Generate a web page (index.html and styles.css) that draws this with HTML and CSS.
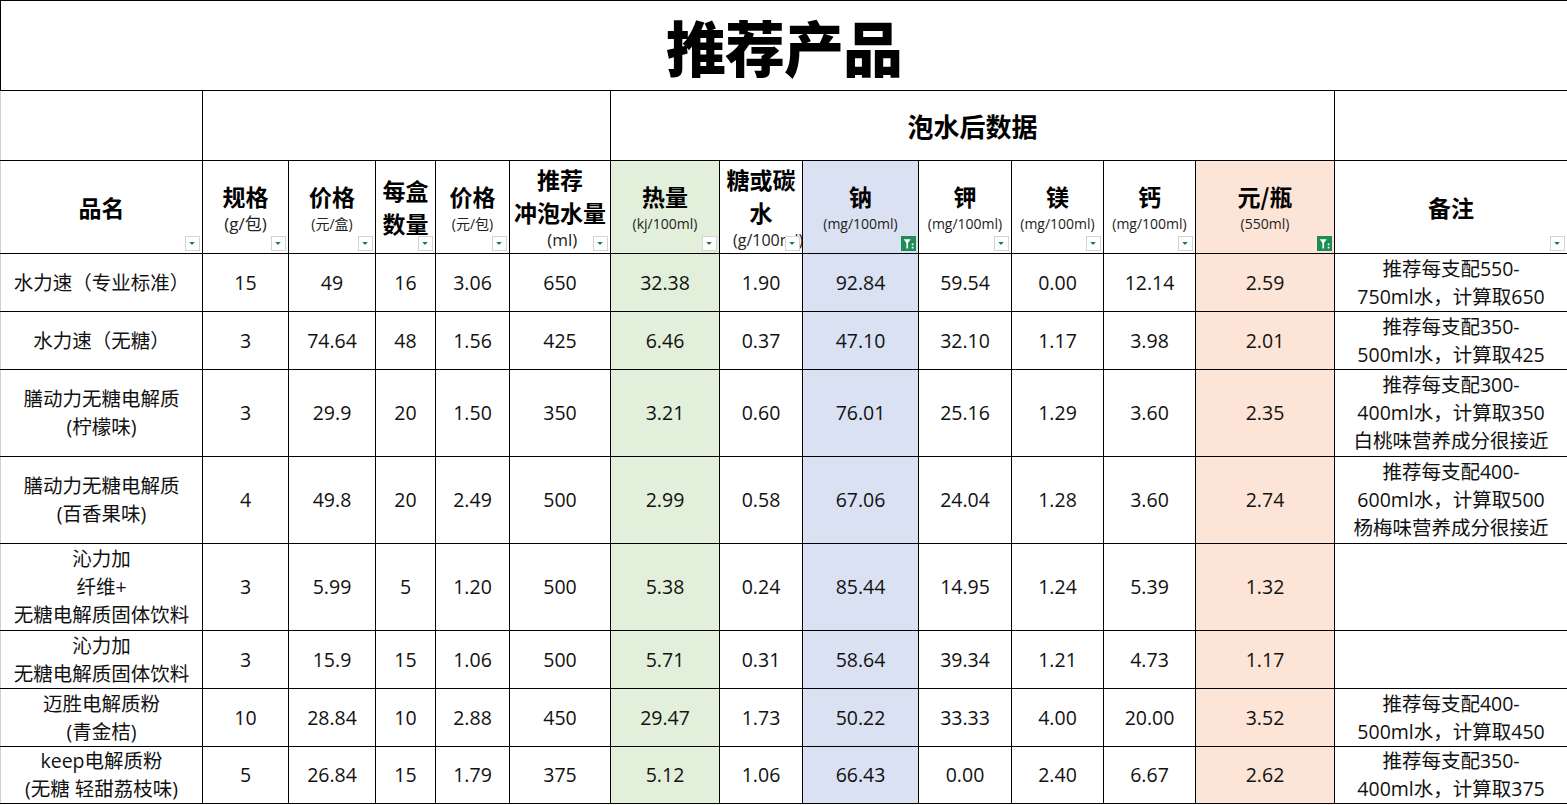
FILE: index.html
```html
<!DOCTYPE html>
<html lang="zh-CN">
<head>
<meta charset="utf-8">
<title>推荐产品</title>
<link rel="stylesheet" href="styles.css">
</head>
<body>
<table class="sheet">
  <colgroup>
    <col style="width:202px"><col style="width:86px"><col style="width:87px"><col style="width:60px"><col style="width:74px"><col style="width:101px"><col style="width:109px"><col style="width:83px"><col style="width:116px"><col style="width:93px"><col style="width:92px"><col style="width:92px"><col style="width:139px"><col style="width:233px">
  </colgroup>
  <tr class="r-title"><td colspan="14" class="title">推荐产品</td></tr>
  <tr class="r-group">
    <td class="c0"></td>
    <td colspan="5"></td>
    <td colspan="7" class="group">泡水后数据</td>
    <td></td>
  </tr>
  <tr class="r-head">
    <td class="hd c0"><div class="h">品名</div><span class="flt"><svg viewBox="0 0 14 14"><path d="M3.5 5.5h6l-3 3.2z"/></svg></span></td>
    <td class="hd"><div class="h">规格</div><div class="s s17">(g/包)</div><span class="flt"><svg viewBox="0 0 14 14"><path d="M3.5 5.5h6l-3 3.2z"/></svg></span></td>
    <td class="hd"><div class="h">价格</div><div class="s">(元/盒)</div><span class="flt"><svg viewBox="0 0 14 14"><path d="M3.5 5.5h6l-3 3.2z"/></svg></span></td>
    <td class="hd"><div class="h">每盒<br>数量</div><span class="flt"><svg viewBox="0 0 14 14"><path d="M3.5 5.5h6l-3 3.2z"/></svg></span></td>
    <td class="hd"><div class="h">价格</div><div class="s">(元/包)</div><span class="flt"><svg viewBox="0 0 14 14"><path d="M3.5 5.5h6l-3 3.2z"/></svg></span></td>
    <td class="hd"><div class="h">推荐<br>冲泡水量</div><div class="s s17">&nbsp;(ml)</div><span class="flt"><svg viewBox="0 0 14 14"><path d="M3.5 5.5h6l-3 3.2z"/></svg></span></td>
    <td class="hd green"><div class="h">热量</div><div class="s">(kj/100ml)</div><span class="flt"><svg viewBox="0 0 14 14"><path d="M3.5 5.5h6l-3 3.2z"/></svg></span></td>
    <td class="hd"><div class="h">糖或碳<br>水</div><div class="s s16 clip">(g/100ml)</div><span class="flt"><svg viewBox="0 0 14 14"><path d="M3.5 5.5h6l-3 3.2z"/></svg></span></td>
    <td class="hd blue"><div class="h">钠</div><div class="s">(mg/100ml)</div><span class="flt on"><svg viewBox="0 0 14 14"><path d="M2.5 3h6.6l-2.5 3.3v5.4h-1.6v-5.4z"/><rect x="10" y="7" width="1.6" height="1.6"/><rect x="10" y="10" width="1.6" height="1.6"/></svg></span></td>
    <td class="hd"><div class="h">钾</div><div class="s">(mg/100ml)</div><span class="flt"><svg viewBox="0 0 14 14"><path d="M3.5 5.5h6l-3 3.2z"/></svg></span></td>
    <td class="hd"><div class="h">镁</div><div class="s">(mg/100ml)</div><span class="flt"><svg viewBox="0 0 14 14"><path d="M3.5 5.5h6l-3 3.2z"/></svg></span></td>
    <td class="hd"><div class="h">钙</div><div class="s">(mg/100ml)</div><span class="flt"><svg viewBox="0 0 14 14"><path d="M3.5 5.5h6l-3 3.2z"/></svg></span></td>
    <td class="hd orange"><div class="h">元/瓶</div><div class="s">(550ml)</div><span class="flt on"><svg viewBox="0 0 14 14"><path d="M2.5 3h6.6l-2.5 3.3v5.4h-1.6v-5.4z"/><rect x="10" y="7" width="1.6" height="1.6"/><rect x="10" y="10" width="1.6" height="1.6"/></svg></span></td>
    <td class="hd"><div class="h">备注</div><span class="flt"><svg viewBox="0 0 14 14"><path d="M3.5 5.5h6l-3 3.2z"/></svg></span></td>
  </tr>
  <tr class="r2">
    <td class="c0">水力速（专业标准）</td><td>15</td><td>49</td><td>16</td><td>3.06</td><td>650</td><td class="green">32.38</td><td>1.90</td><td class="blue">92.84</td><td>59.54</td><td>0.00</td><td>12.14</td><td class="orange">2.59</td><td>推荐每支配550-<br>750ml水，计算取650</td>
  </tr>
  <tr class="r2">
    <td class="c0">水力速（无糖）</td><td>3</td><td>74.64</td><td>48</td><td>1.56</td><td>425</td><td class="green">6.46</td><td>0.37</td><td class="blue">47.10</td><td>32.10</td><td>1.17</td><td>3.98</td><td class="orange">2.01</td><td>推荐每支配350-<br>500ml水，计算取425</td>
  </tr>
  <tr class="r3">
    <td class="c0">膳动力无糖电解质<br>(柠檬味)</td><td>3</td><td>29.9</td><td>20</td><td>1.50</td><td>350</td><td class="green">3.21</td><td>0.60</td><td class="blue">76.01</td><td>25.16</td><td>1.29</td><td>3.60</td><td class="orange">2.35</td><td>推荐每支配300-<br>400ml水，计算取350<br>白桃味营养成分很接近</td>
  </tr>
  <tr class="r3">
    <td class="c0">膳动力无糖电解质<br>(百香果味)</td><td>4</td><td>49.8</td><td>20</td><td>2.49</td><td>500</td><td class="green">2.99</td><td>0.58</td><td class="blue">67.06</td><td>24.04</td><td>1.28</td><td>3.60</td><td class="orange">2.74</td><td>推荐每支配400-<br>600ml水，计算取500<br>杨梅味营养成分很接近</td>
  </tr>
  <tr class="r3">
    <td class="c0">沁力加<br>纤维+<br>无糖电解质固体饮料</td><td>3</td><td>5.99</td><td>5</td><td>1.20</td><td>500</td><td class="green">5.38</td><td>0.24</td><td class="blue">85.44</td><td>14.95</td><td>1.24</td><td>5.39</td><td class="orange">1.32</td><td></td>
  </tr>
  <tr class="r2">
    <td class="c0">沁力加<br>无糖电解质固体饮料</td><td>3</td><td>15.9</td><td>15</td><td>1.06</td><td>500</td><td class="green">5.71</td><td>0.31</td><td class="blue">58.64</td><td>39.34</td><td>1.21</td><td>4.73</td><td class="orange">1.17</td><td></td>
  </tr>
  <tr class="r2">
    <td class="c0">迈胜电解质粉<br>(青金桔)</td><td>10</td><td>28.84</td><td>10</td><td>2.88</td><td>450</td><td class="green">29.47</td><td>1.73</td><td class="blue">50.22</td><td>33.33</td><td>4.00</td><td>20.00</td><td class="orange">3.52</td><td>推荐每支配400-<br>500ml水，计算取450</td>
  </tr>
  <tr class="r2 last">
    <td class="c0">keep电解质粉<br>(无糖 轻甜荔枝味)</td><td>5</td><td>26.84</td><td>15</td><td>1.79</td><td>375</td><td class="green">5.12</td><td>1.06</td><td class="blue">66.43</td><td>0.00</td><td>2.40</td><td>6.67</td><td class="orange">2.62</td><td>推荐每支配350-<br>400ml水，计算取375</td>
  </tr>
</table>
</body>
</html>
```
FILE: styles.css
```css
html, body {
  margin: 0;
  padding: 0;
  background: #fff;
}
body {
  font-family: "Open Sans", "Noto Sans CJK SC", sans-serif;
  color: #000;
}
.sheet {
  border-collapse: collapse;
  table-layout: fixed;
  width: 1567px;
}
.sheet td {
  border: 1px solid #000;
  padding: 0;
  text-align: center;
  vertical-align: middle;
  font-size: 19.5px;
  line-height: 28px;
  white-space: nowrap;
  overflow: hidden;
  color: #111;
}
.sheet td.c0 {
  border-left-color: #cfcfcf;
}
.r-title { height: 90px; }
.r-group { height: 70px; }
.r-head { height: 93px; }
.r2 { height: 58px; }
.r3 { height: 87px; }
.r2.last { height: 57px; }

.sheet td.title {
  font-family: "Noto Sans CJK SC", sans-serif;
  font-size: 60px;
  font-weight: 900;
  line-height: 1;
  letter-spacing: -1px;
  color: #000;
}
.sheet td.group {
  font-family: "Noto Sans CJK SC", sans-serif;
  font-size: 26px;
  font-weight: 700;
  line-height: 1;
  color: #000;
}
.sheet td.hd {
  position: relative;
  color: #000;
}
.hd .h {
  font-family: "Noto Sans CJK SC", sans-serif;
  font-weight: 700;
  font-size: 23px;
  line-height: 33px;
}
.hd .s {
  font-size: 14px;
  line-height: 22px;
  color: #222;
}
.hd .s16 {
  font-size: 16px;
}
.hd .s17 {
  font-size: 17px;
}
.hd .clip {
  text-align: left;
  padding-left: 13px;
  overflow: hidden;
  white-space: nowrap;
}
.green { background: #e2efda; }
.blue { background: #d9e1f2; }
.orange { background: #fce4d6; }

.flt {
  position: absolute;
  right: 2px;
  bottom: 2px;
  width: 15px;
  height: 15px;
  box-sizing: border-box;
  border: 1px solid #d4d4d4;
  background: #fff;
  display: flex;
}
.flt svg {
  width: 100%;
  height: 100%;
  fill: #1e7b4b;
}
.flt.on {
  border: none;
  background: #1f8c57;
}
.flt.on svg {
  fill: #fff;
}
```
